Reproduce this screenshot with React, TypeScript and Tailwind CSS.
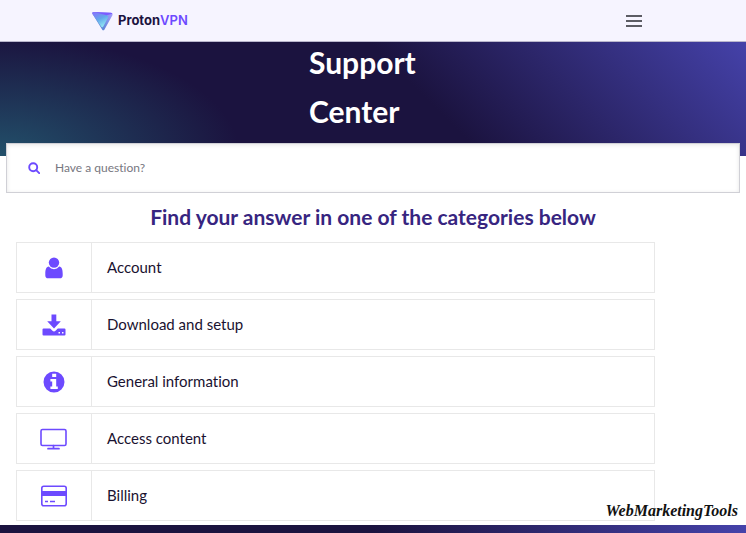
import type { ReactNode } from 'react';

const UserIcon = () => (
    <svg viewBox="0 0 18 22" className="w-[18px] h-[22px]" fill="currentColor" aria-hidden="true">
        <circle cx="9" cy="5.6" r="5.2" />
        <path d="M3.800 9.600a6.600 6.600 0 0 0 10.400 0c2.700.3 3.500 3 3.500 7.200v1.400a3 3 0 0 1-3 3.100H3.300a3 3 0 0 1-3-3.100v-1.400c0-4.200.8-6.900 3.500-7.200Z" />
    </svg>
);

const DownloadIcon = () => (
    <svg viewBox="0 0 24 22" className="w-6 h-[22px]" fill="currentColor" aria-hidden="true">
        <path d="M9.500 .5h4.800v6.700h4.500L12 14.500 5.200 7.200h4.300Z" />
        <path
            fillRule="evenodd"
            d="M1.600 14.500h6.600l2.300 2.300a2.100 2.100 0 0 0 3 0l2.300-2.300h6.600a1.100 1.100 0 0 1 1.100 1.100v4.800a1.100 1.100 0 0 1-1.100 1.100H1.600a1.100 1.100 0 0 1-1.100-1.100v-4.800a1.100 1.100 0 0 1 1.100-1.100ZM16.500 18v1.400H18V18Zm3.500 0v1.400h1.500V18Z"
        />
    </svg>
);

const InfoIcon = () => (
    <svg viewBox="0 0 22 22" className="w-[22px] h-[22px]" fill="currentColor" aria-hidden="true">
        <path
            fillRule="evenodd"
            d="M11 .5a10.500 10.500 0 1 1 0 21 10.500 10.500 0 0 1 0-21ZM9.200 2.800v3.200h4v-3.200ZM7.400 8v2.400h1.800v5.200H7.400V18h7.400v-2.400h-1.600V8Z"
        />
    </svg>
);

const MonitorIcon = () => (
    <svg viewBox="0 0 28 22" className="w-7 h-[22px]" fill="none" stroke="currentColor" aria-hidden="true">
        <rect x="1" y="1.500" width="25" height="16" rx="1.500" strokeWidth="1.600" />
        <path d="M13.500 17.500v3M8 20.700h11" strokeWidth="1.700" strokeLinecap="round" />
    </svg>
);

const CardIcon = () => (
    <svg viewBox="0 0 26 22" className="w-[26px] h-[22px]" fill="none" stroke="currentColor" aria-hidden="true">
        <rect x=".8" y="1.300" width="24.400" height="19.400" rx="2" strokeWidth="1.600" />
        <path d="M1 8.500h24" strokeWidth="5" />
        <path d="M4 16.500h3M9 16.500h5" strokeWidth="1.400" />
    </svg>
);

const SearchIcon = () => (
    <svg viewBox="0 0 12 12" className="w-3 h-3" fill="none" stroke="currentColor" strokeWidth="1.900" aria-hidden="true">
        <circle cx="5.200" cy="5.200" r="4" />
        <path d="m8.200 8.200 3 3" strokeLinecap="round" />
    </svg>
);

const Logo = () => (
    <svg viewBox="0 0 21 20" className="w-[21px] h-5" aria-hidden="true">
        <defs>
            <linearGradient id="face" x1="0" y1="0" x2="0.500" y2="1">
                <stop offset="0" stopColor="#8b6cff" />
                <stop offset="0.550" stopColor="#62a8ea" />
                <stop offset="1" stopColor="#8fe3f2" />
            </linearGradient>
            <linearGradient id="edge" x1="1" y1="0" x2="0" y2="1">
                <stop offset="0" stopColor="#a99bff" />
                <stop offset="1" stopColor="#3f7fc6" />
            </linearGradient>
        </defs>
        <path d="M1.800 1 18.800 1.800c1.500.1 2.200 1.300 1.500 2.600l-7.800 14c-.7 1.200-1.800 1.100-2.400 0L.5 3C-.1 1.800.6 1 1.800 1Z" fill="url(#edge)" />
        <path d="M1.800 1 14.500 4.300c1.500.4 2 1.500 1.300 2.700l-4.500 8.500c-.5 1-1.400 1.200-2 .2L.5 3C-.1 1.800.6 1 1.800 1Z" fill="url(#face)" />
        <path d="M1.800 1 18.800 1.800c.8.1 1.400.5 1.600 1L14.500 4.300Z" fill="#7a5cff" />
    </svg>
);

type Category = { title: string; icon: ReactNode };

const categories: Category[] = [
    { title: 'Account', icon: <UserIcon /> },
    { title: 'Download and setup', icon: <DownloadIcon /> },
    { title: 'General information', icon: <InfoIcon /> },
    { title: 'Access content', icon: <MonitorIcon /> },
    { title: 'Billing', icon: <CardIcon /> }
];

const App = () => {
    return (
        <div className="relative bg-white font-['Lato',sans-serif] [font-variant-ligatures:none]">
            <header className="relative z-10 bg-[#f6f4ff] border-b border-[#b9b6cc]">
                <div className="max-w-[562px] h-[41px] mx-auto flex items-center justify-between">
                    <a href="#" className="flex items-center gap-[5px]">
                        <Logo />
                        <span className="font-['Inter',sans-serif] text-[13px] font-bold text-[#1c1340]">
                            Proton<span className="font-semibold text-[#6d4aff]">VPN</span>
                        </span>
                    </a>
                    <button type="button" aria-label="Menu" className="px-3 py-2 flex flex-col gap-[3px]">
                        <span className="w-4 h-0.5 bg-[#5c5c64]" />
                        <span className="w-4 h-0.5 bg-[#5c5c64]" />
                        <span className="w-4 h-0.5 bg-[#5c5c64]" />
                    </button>
                </div>
            </header>

            <section className="-mt-1 pb-5 bg-[radial-gradient(ellipse_240px_120px_at_0_100%,#22506a,#1b133f00),linear-gradient(45deg,#1b133f_56%,#4542aa)]">
                <h1 className="w-32 mx-auto text-[30px] leading-[49px] font-bold text-white">
                    Support Center
                </h1>
            </section>

            <main>
                <form className="relative -mt-[13px] mx-1.5">
                    <label className="h-[50px] flex items-center gap-[15px] px-[21px] bg-white border border-[#d0d0d6] shadow-[inset_0_1px_4px_#0000001a]">
                        <span className="text-[#6d4aff]">
                            <SearchIcon />
                        </span>
                        <input
                            type="search"
                            aria-label="Have a question?"
                            placeholder="Have a question?"
                            className="flex-1 text-xs text-gray-700 placeholder:text-[#777780] outline-none"
                        />
                    </label>
                </form>

                <h2 className="pt-2 pb-[9px] text-[21px] leading-8 font-bold text-center text-[#372580]">
                    Find your answer in one of the categories below
                </h2>

                <ul className="ml-4 mr-[91px] flex flex-col gap-1.5 pb-1">
                    {categories.map((category) => (
                        <li key={category.title}>
                            <a href="#" className="flex h-[51px] border border-[#e8e8e8] text-[15px] text-[#1a1230]">
                                <span className="w-[75px] flex items-center justify-center border-r border-[#e8e8e8] text-[#6d4aff]">
                                    {category.icon}
                                </span>
                                <span className="flex items-center pl-[15px]">{category.title}</span>
                            </a>
                        </li>
                    ))}
                </ul>
            </main>

            <footer className="h-2 bg-linear-to-r from-[#1b133f] from-50% to-[#4542aa]" />

            <p className="absolute right-2 bottom-2.5 font-['Liberation_Serif',serif] text-[16px] leading-6 font-bold italic text-[#111111]">
                WebMarketingTools
            </p>
        </div>
    );
};

export default App;
